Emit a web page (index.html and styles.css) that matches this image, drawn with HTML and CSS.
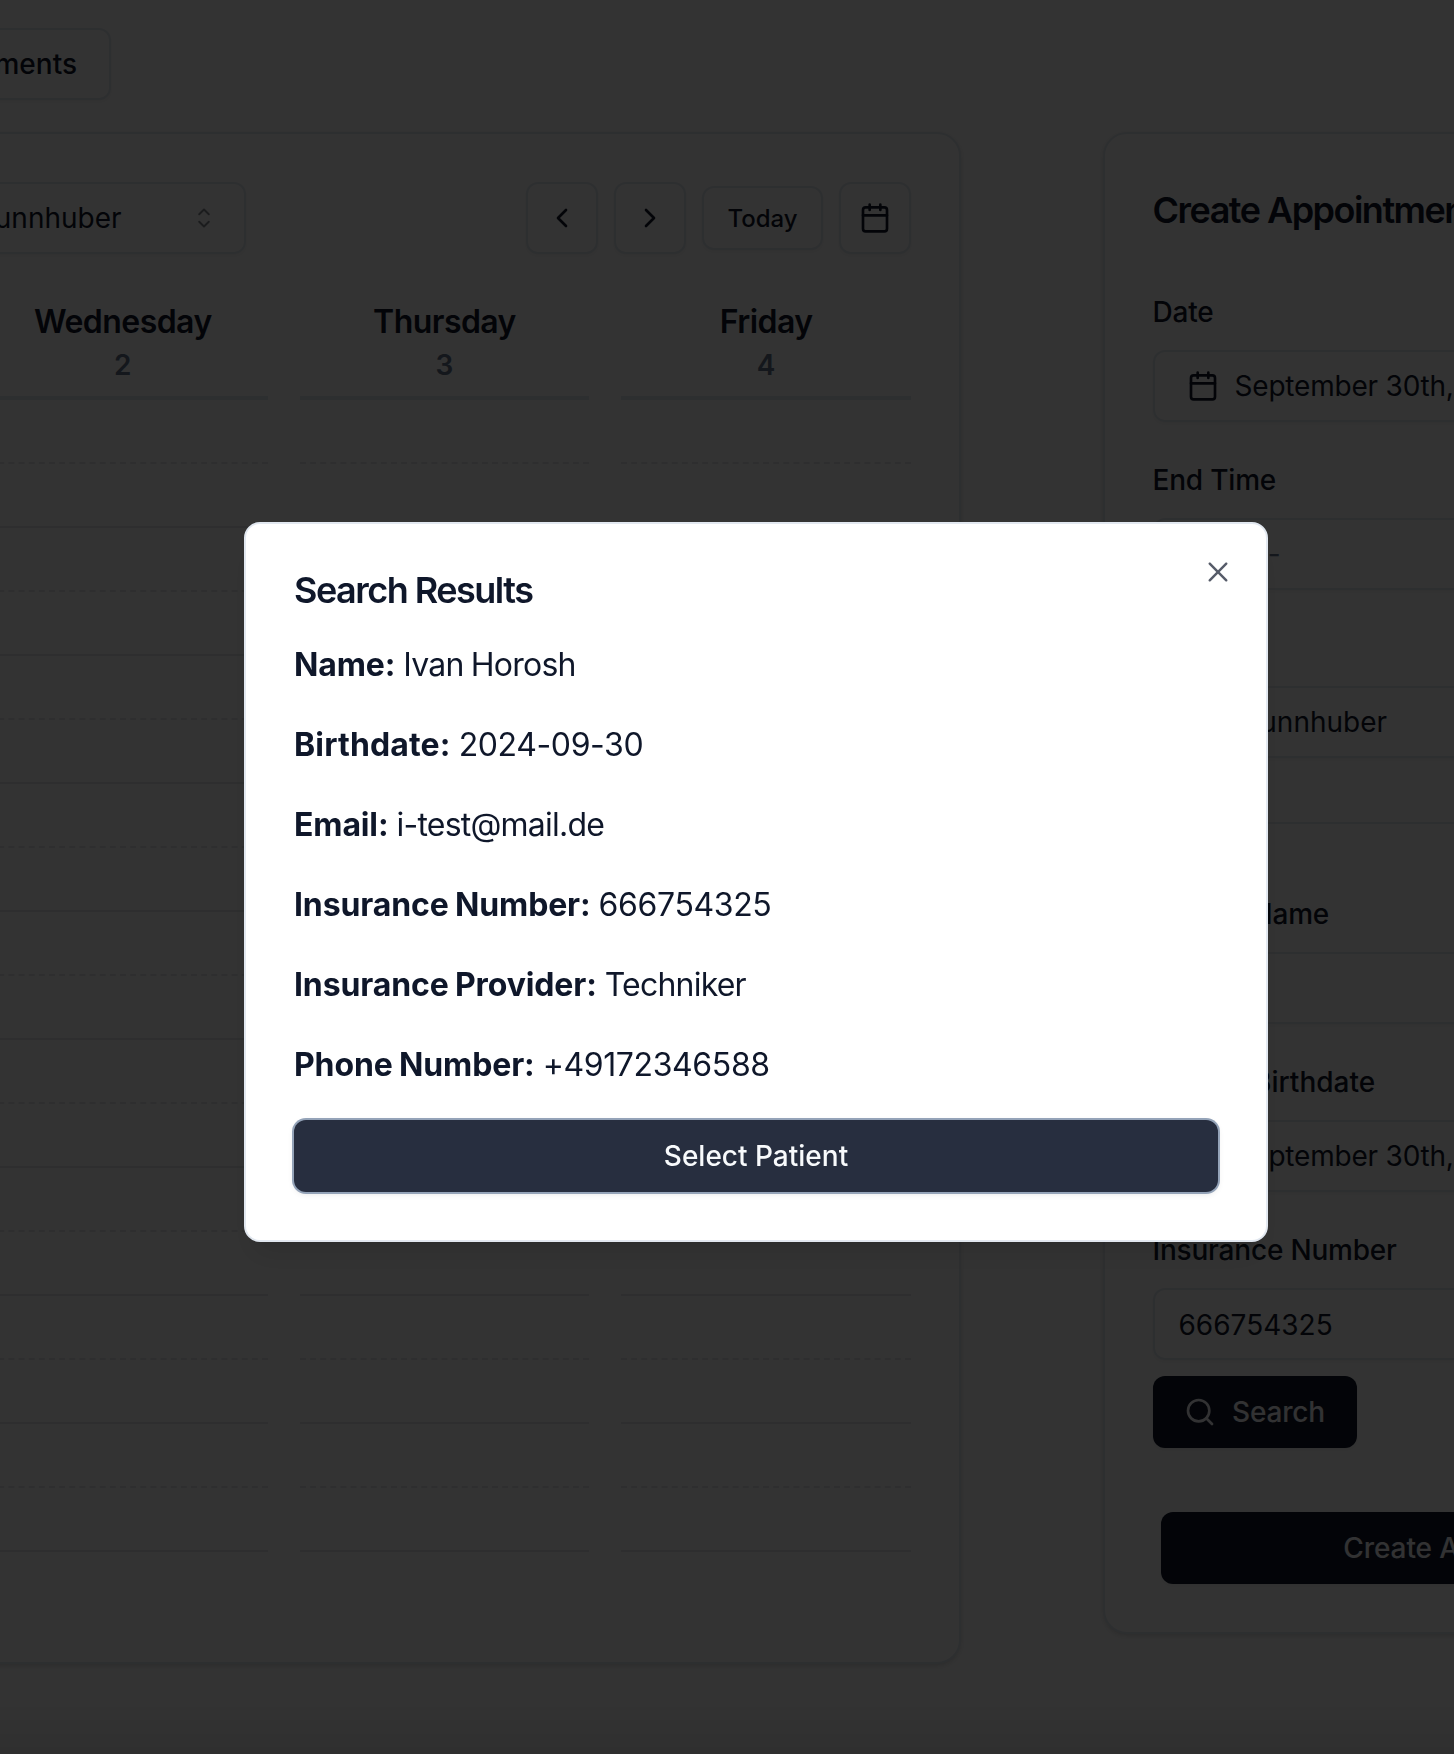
FILE: index.html
```html
<!DOCTYPE html>
<html lang="en">
<head>
<meta charset="utf-8">
<title>Appointments</title>
<link rel="stylesheet" href="styles.css">
</head>
<body>
<svg class="defs" width="0" height="0" aria-hidden="true">
  <symbol id="calendar" viewBox="0 0 24 24"><rect x="3" y="4" width="18" height="18" rx="2"/><path d="M16 2v4M8 2v4M3 10h18"/></symbol>
  <symbol id="search" viewBox="0 0 24 24"><circle cx="11" cy="11" r="8"/><path d="m21 21-4.3-4.3"/></symbol>
</svg>
<div class="page">
  <nav class="nav"><button class="btn outline nav-btn">Appointments</button></nav>
  <main class="main">
    <section class="card calendar">
      <div class="toolbar">
        <div class="select toolbar-select"><span>Dr. Brunnhuber</span>
          <svg class="caret" viewBox="0 0 15 15"><path d="M5.25 5.75 7.5 3.5l2.25 2.25M5.25 9.25 7.5 11.5l2.25-2.25"/></svg>
        </div>
        <div class="controls">
          <button class="btn outline square"><svg class="icon" viewBox="0 0 24 24"><path d="m15 18-6-6 6-6"/></svg></button>
          <button class="btn outline square"><svg class="icon" viewBox="0 0 24 24"><path d="m9 18 6-6-6-6"/></svg></button>
          <button class="btn outline small">Today</button>
          <button class="btn outline square"><svg class="icon"><use href="#calendar"/></svg></button>
        </div>
      </div>
      <div class="days">
        <div class="day"><header><h3>Wednesday</h3><p>2</p></header><div class="slots"><i></i><i></i><i></i><i></i><i></i><i></i><i></i><i></i><i></i><i></i><i></i><i></i><i></i><i></i><i></i><i></i><i></i><i></i><i></i></div></div>
        <div class="day"><header><h3>Thursday</h3><p>3</p></header><div class="slots"><i></i><i></i><i></i><i></i><i></i><i></i><i></i><i></i><i></i><i></i><i></i><i></i><i></i><i></i><i></i><i></i><i></i><i></i><i></i></div></div>
        <div class="day"><header><h3>Friday</h3><p>4</p></header><div class="slots"><i></i><i></i><i></i><i></i><i></i><i></i><i></i><i></i><i></i><i></i><i></i><i></i><i></i><i></i><i></i><i></i><i></i><i></i><i></i></div></div>
      </div>
    </section>
    <section class="card form">
      <h2 class="form-title">Create Appointment</h2>
      <div class="fields">
        <div class="field"><label>Date</label><div class="input picker"><svg class="icon"><use href="#calendar"/></svg>September 30th, 2024</div></div>
        <div class="field"><label>End Time</label><div class="input time">--:-- --</div></div>
        <div class="field"><label>Doctor</label><div class="input doctor">Dr. Brunnhuber</div></div>
      </div>
      <hr>
      <div class="fields">
        <div class="field"><label>Patient Name</label><div class="input"></div></div>
        <div class="field"><label class="wide">Patient Birthdate</label><div class="input picker"><svg class="icon"><use href="#calendar"/></svg>September 30th, 2024</div></div>
        <div class="field"><label>Insurance Number</label><div class="input number">666754325</div></div>
      </div>
      <button class="btn primary search"><svg class="icon"><use href="#search"/></svg>Search</button>
      <button class="btn primary create">Create Appointment</button>
    </section>
  </main>
</div>
<div class="overlay">
  <div class="dialog" role="dialog">
    <h2>Search Results</h2>
    <p><strong>Name:</strong> <span class="words">Ivan Horosh</span></p>
    <p><strong class="wide">Birthdate:</strong> <span class="digits">2024-09-30</span></p>
    <p><strong>Email:</strong> <span class="words">i-test@mail.de</span></p>
    <p><strong>Insurance Number:</strong> <span class="digits">666754325</span></p>
    <p><strong>Insurance Provider:</strong> <span class="words">Techniker</span></p>
    <p><strong>Phone Number:</strong> <span class="digits">+49172346588</span></p>
    <button class="btn primary focused">Select Patient</button>
    <button class="close" aria-label="Close"><svg viewBox="0 0 15 15"><path d="M11.7816 4.03157C12.0062 3.80702 12.0062 3.44295 11.7816 3.2184C11.5571 2.99385 11.193 2.99385 10.9685 3.2184L7.50005 6.68682L4.03164 3.2184C3.80708 2.99385 3.44301 2.99385 3.21846 3.2184C2.99391 3.44295 2.99391 3.80702 3.21846 4.03157L6.68688 7.49999L3.21846 10.9684C2.99391 11.193 2.99391 11.557 3.21846 11.7816C3.44301 12.0061 3.80708 12.0061 4.03164 11.7816L7.50005 8.31316L10.9685 11.7816C11.193 12.0061 11.5571 12.0061 11.7816 11.7816C12.0062 11.557 12.0062 11.193 11.7816 10.9684L8.31322 7.49999L11.7816 4.03157Z"/></svg></button>
  </div>
</div>
</body>
</html>
```

FILE: styles.css
```css
*, *::before, *::after { box-sizing: border-box; }
html, body { margin: 0; height: 100%; overflow: hidden; }
body { background: #fff; color: #0f172a; font-family: Inter, "Liberation Sans", sans-serif; font-size: 28px; line-height: 40px; }
h2, h3, p { margin: 0; }
.defs { display: none; }
.page { height: 1754px; overflow: hidden; }

.icon { width: 32px; height: 32px; flex: none; fill: none; stroke: currentColor; stroke-width: 2; stroke-linecap: round; stroke-linejoin: round; }
.btn { display: inline-flex; align-items: center; justify-content: center; height: 72px; padding: 0 32px; border: 0; border-radius: 12px; font: 500 28px/40px Inter, "Liberation Sans", sans-serif; color: inherit; background: transparent; white-space: nowrap; box-shadow: 0 2px 4px rgba(0, 0, 0, .05); }
.outline { border: 2px solid #e2e8f0; background: #fff; }
.primary { background: #0f172a; color: #f8fafc; }
.square { width: 72px; padding: 0; }
.small { width: 121px; height: 64px; padding: 2px 0 0; font-size: 24px; }

.nav { display: flex; height: 132px; padding-top: 28px; }
.nav-btn { width: 311px; margin-left: -200px; justify-content: flex-end; }

.main { display: flex; align-items: flex-start; gap: 141.5px; width: 1920px; margin-left: -72px; }
.card { flex: none; padding: 48px; border: 2px solid #e2e8f0; border-radius: 24px; background: #fff; box-shadow: 0 2px 6px rgba(0, 0, 0, .1), 0 2px 4px -2px rgba(0, 0, 0, .1); }
.calendar { width: 1033px; }
.toolbar { display: flex; justify-content: space-between; align-items: center; height: 72px; }
.controls { display: flex; align-items: center; gap: 16px; }
.toolbar-select { display: flex; align-items: center; justify-content: space-between; width: 359px; height: 72px; margin-left: -91px; padding: 0 24px 0 32px; border: 2px solid #e2e8f0; border-radius: 12px; box-shadow: 0 2px 4px rgba(0, 0, 0, .05); }
.caret { width: 32px; height: 32px; fill: none; stroke: currentColor; stroke-width: .9; stroke-linecap: round; stroke-linejoin: round; opacity: .5; }

.days { display: grid; grid-template-columns: repeat(3, 1fr); gap: 32px; margin-top: 44px; }
.day header { height: 102px; border-bottom: 4px solid #e2e8f0; text-align: center; }
.day h3 { font-size: 32px; line-height: 47px; font-weight: 600; letter-spacing: -.55px; }
.day p { font-weight: 600; color: #64748b; }
.slots i { display: block; height: 64px; border-bottom: 2px solid #e5e7eb; }
.slots i:nth-child(odd) { border-bottom-style: dashed; }
.slots i:last-child { height: 62px; border-bottom: 0; }

.form { width: 746px; }
.form-title { font-size: 36px; line-height: 56px; font-weight: 600; letter-spacing: -.042em; white-space: nowrap; }
.fields { display: flex; flex-direction: column; gap: 44px; margin-top: 60px; }
.field { display: flex; flex-direction: column; gap: 24px; }
.field label { font-weight: 500; line-height: 28px; letter-spacing: -.2px; }
.field label.wide { letter-spacing: 0; }
.input { display: flex; align-items: center; height: 72px; padding: 0 24px; border: 2px solid #e2e8f0; border-radius: 12px; box-shadow: 0 2px 4px rgba(0, 0, 0, .05); }
.picker { gap: 16px; padding: 0 32px; letter-spacing: -.2px; }
.doctor { padding-left: 32px; }
.number { padding-top: 2px; }
.time { padding-left: 33px; color: #64748b; }
.form hr { height: 2px; margin: 64px 0 0; border: 0; background: #e2e8f0; }
.form hr + .fields { margin-top: 76px; }
.search { display: flex; gap: 16px; width: 204px; margin-top: 16px; letter-spacing: -.2px; }
.create { display: flex; width: 633px; margin: 64px 8px 0; letter-spacing: -.1px; }

.overlay { position: fixed; inset: 0; display: flex; align-items: flex-start; justify-content: center; padding: 522px 0 0 58px; background: linear-gradient(transparent 1700px, rgba(0, 0, 0, .08) 1754px), rgba(0, 0, 0, .8); }
.dialog { position: relative; display: grid; gap: 32px; width: 1024px; height: 720px; padding: 48px; border: 2px solid #e2e8f0; border-radius: 16px; background: #fff; box-shadow: 0 20px 30px -6px rgba(0, 0, 0, .1), 0 8px 12px -8px rgba(0, 0, 0, .1); font-size: 32px; line-height: 48px; }
.dialog h2 { font-size: 36px; line-height: 36px; font-weight: 600; letter-spacing: -.042em; }
.dialog p { height: 48px; padding-top: 1px; word-spacing: -1px; }
.dialog strong { font-weight: 700; letter-spacing: -.13px; }
.dialog strong.wide { letter-spacing: .15px; }
.words { letter-spacing: -.78px; }
.digits { letter-spacing: -.38px; }
.focused { background: #272e3f; box-shadow: 0 0 0 2px #94a3b8, 0 2px 6px rgba(0, 0, 0, .1); }
.close { position: absolute; top: 32px; right: 32px; width: 32px; height: 32px; padding: 0; border: 0; background: none; opacity: .7; }
.close svg { display: block; width: 32px; height: 32px; fill: #0f172a; }
```
